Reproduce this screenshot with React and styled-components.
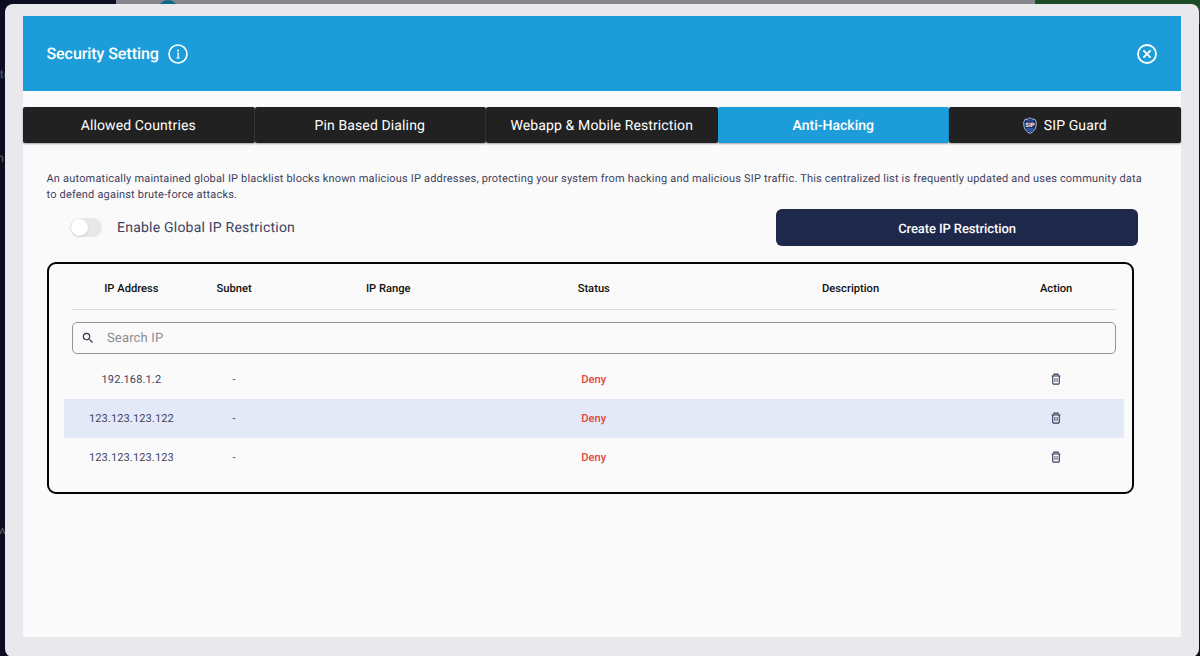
import React from "react";
import styled, { createGlobalStyle } from "styled-components";

const GlobalStyle = createGlobalStyle`
  *, *::before, *::after { box-sizing: border-box; }
  html, body { margin: 0; padding: 0; }
  body {
    overflow: hidden;
    font-family: Roboto, "Liberation Sans", sans-serif;
    color: #3d4260;
    text-rendering: geometricPrecision;
  }
  button, input { font: inherit; color: inherit; text-rendering: inherit; }
`;

const Page = styled.div`
  position: relative;
  width: 1200px;
  height: 656px;
  overflow: hidden;
  background: #0c0d20;
`;

const Backdrop = styled.div`
  display: flex;
  width: 100%;
  height: 100%;
`;

const SideNav = styled.aside`
  width: 116px;
  padding-top: 66px;
  background: #0c0d20;
`;

const NavEnd = styled.div`
  width: ${(p) => p.$width}px;
  height: 16px;
  margin-bottom: ${(p) => p.$gap}px;
  display: flex;
  justify-content: flex-end;
  color: #5d5e6a;
  font-size: 12px;
  line-height: 16px;
`;

const BackPage = styled.div`
  flex: 1;
  padding-left: 42px;
  background: #85868b;
`;

const BackBadge = styled.div`
  width: 20px;
  height: 20px;
  border-radius: 50%;
  background: #0f6888;
`;

const BackBanner = styled.div`
  width: 165px;
  height: 24px;
  background: #1d4c28;
`;

const Modal = styled.section`
  position: absolute;
  top: 4px;
  left: 5px;
  width: 1194px;
  height: 653px;
  padding: 12px 18px 20px;
  border-radius: 8px;
  background: #e8e8ed;
`;

const Panel = styled.div`
  width: 1157.5px;
  height: 621px;
  background: #fafafa;
`;

const Header = styled.header`
  display: flex;
  align-items: center;
  height: 75px;
  padding: 1px 23.5px 0;
  background: #1c9dda;
  color: #fff;
`;

const Title = styled.h1`
  margin: 0 9.5px 0 0;
  font-size: 16px;
  line-height: 20px;
  font-weight: 500;
  letter-spacing: -0.07px;
`;

const IconButton = styled.button`
  display: flex;
  padding: 0;
  border: 0;
  background: none;
  margin-left: ${(p) => (p.$end ? "auto" : "0")};
`;

const Tabs = styled.nav`
  display: grid;
  grid-template-columns: repeat(5, 1fr);
  margin-top: 16px;
  height: 36px;
`;

const Tab = styled.button`
  display: flex;
  align-items: center;
  justify-content: center;
  gap: 7px;
  padding: 1px 0 0;
  border: 0;
  border-right: ${(p) => (p.$divider ? "1px solid #393939" : "0")};
  border-radius: 2px;
  background: ${(p) => (p.$active ? "#1c9dda" : "#212121")};
  box-shadow: 0 1px 2px rgba(0, 0, 0, 0.35);
  color: #fff;
  font-size: 14px;
  letter-spacing: ${(p) => (p.$active ? "0.02px" : "0.12px")};
  font-weight: ${(p) => (p.$active ? 500 : 400)};
`;

const Content = styled.main`
  padding: 28px 36px 0 23.5px;
`;

const Intro = styled.p`
  margin: 0;
  font-size: 11px;
  line-height: 16px;
  letter-spacing: 0.186px;
`;

const Controls = styled.div`
  display: flex;
  align-items: center;
  height: 37px;
  margin-top: 6px;
  padding-left: 23.5px;
`;

const Switch = styled.button`
  display: flex;
  align-items: center;
  width: 32px;
  height: 19px;
  padding: 0 1px;
  border: 0;
  border-radius: 10px;
  background: #e7e7e7;
`;

const Knob = styled.span`
  width: 17px;
  height: 17px;
  border-radius: 50%;
  background: #fff;
  box-shadow: 0 1px 2px rgba(0, 0, 0, 0.12);
`;

const SwitchLabel = styled.span`
  margin-left: 15px;
  font-size: 14px;
  letter-spacing: 0.22px;
`;

const CreateButton = styled.button`
  flex: none;
  width: 362px;
  height: 37px;
  margin-left: auto;
  margin-right: 6.5px;
  padding: 3px 0 0;
  border: 0;
  border-radius: 6px;
  background: #1e284b;
  color: #fff;
  font-size: 13px;
  font-weight: 500;
  letter-spacing: -0.1px;
`;

const TableCard = styled.section`
  width: 1087px;
  height: 232px;
  margin-top: 16px;
  padding: 0 8px 0 15.5px;
  border: 2px solid #050505;
  border-radius: 9px;
`;

const Row = styled.div`
  display: grid;
  grid-template-columns: 1fr 1fr 2fr 2fr 3fr 1fr;
  align-items: center;
  justify-items: center;
  height: 39px;
  padding: 0 16px;
  background: ${(p) => (p.$shaded ? "#e4e9f8" : "transparent")};
  font-size: 11px;
  letter-spacing: 0.14px;
`;

const HeadRow = styled(Row)`
  height: 46px;
  margin: 0 8px;
  padding: 3px 8px 0;
  border-bottom: 1px solid #dcdcdc;
  color: #111;
  font-size: 11.2px;
  font-weight: 500;
  letter-spacing: 0;
`;

const Search = styled.label`
  display: flex;
  align-items: center;
  gap: 12px;
  height: 32px;
  margin: 12px 8px 6px;
  padding: 0 8px;
  border: 1px solid #949494;
  border-radius: 5px;
`;

const SearchInput = styled.input`
  flex: 1;
  padding: 1px 0 0;
  border: 0;
  outline: 0;
  background: none;
  font-size: 13px;
  letter-spacing: 0.15px;
  &::placeholder { color: #8c8c90; opacity: 1; }
`;

const Denied = styled.span`
  color: #e04a40;
  font-size: 11.2px;
  line-height: 13px;
  font-weight: 500;
  letter-spacing: 0;
`;

const DeleteButton = styled(IconButton)`
  padding-bottom: 1px;
`;

const InfoIcon = () => (
  <svg width="20" height="20" viewBox="0 0 20 20" fill="none" stroke="currentColor">
    <circle cx="10" cy="10" r="9" strokeWidth="1.6" />
    <path d="M9.1 9h1.1v5M8.6 13.9h2.900" strokeWidth="1.2" />
    <circle cx="10" cy="6.4" r="1" fill="currentColor" stroke="none" />
  </svg>
);

const CloseIcon = () => (
  <svg width="21" height="20" viewBox="0 0 21 20" fill="none" stroke="currentColor">
    <circle cx="11" cy="10" r="9" strokeWidth="1.8" />
    <path d="M7.400 6.400l7.200 7.200M14.600 6.400l-7.200 7.200" strokeWidth="1.9" />
  </svg>
);

const SearchIcon = () => (
  <svg width="14" height="14" viewBox="0 0 24 24" fill="#30374f">
    <path d="M15.5 14h-.79l-.28-.27A6.47 6.47 0 0 0 16 9.5 6.5 6.5 0 1 0 9.5 16c1.61 0 3.09-.59 4.23-1.57l.27.28v.79l5 4.99L20.49 19zm-6 0C7.01 14 5 11.99 5 9.5S7.01 5 9.5 5 14 7.01 14 9.5 11.99 14 9.5 14" />
  </svg>
);

const TrashIcon = () => (
  <svg width="10" height="12" viewBox="0 0 10 12" fill="none" stroke="#343a59">
    <path d="M.5 3h9M3 2.8V1.1h4v1.7M1.7 3.2v6.9q0 1 1 1h4.6q1 0 1-1V3.2" strokeWidth="1.1" />
    <path d="M3.9 5v4M6.1 5v4" strokeWidth=".9" />
  </svg>
);

const ShieldIcon = () => (
  <svg width="14" height="17" viewBox="0 0 14 17">
    <path d="M7 .7l1.5 1.1 3.7.8 1.1 2.8-.3 4.1c-.6 3.2-2.8 5.5-6 6.9C3.8 15 1.6 12.7 1 9.500L.7 5.400l1.100-2.800 3.700-.8z" fill="#122c67" stroke="#b9d0f1" strokeWidth=".9" />
    <path d="M3.300 3.900h7.500M3.500 11.700h7c-.9 1.300-2.200 2.200-3.500 2.800-1.300-.6-2.600-1.500-3.500-2.800z" fill="#234b94" stroke="#5b82c3" strokeWidth=".6" />
    <text x="7" y="10" textAnchor="middle" fill="#fff" fontFamily="Roboto, sans-serif" fontWeight="700" fontSize="6" letterSpacing="0">SIP</text>
  </svg>
);

const tabs = [
  { label: "Allowed Countries", divider: true },
  { label: "Pin Based Dialing", divider: true },
  { label: "Webapp & Mobile Restriction" },
  { label: "Anti-Hacking", active: true },
  { label: "SIP Guard", icon: <ShieldIcon /> },
];

const columns = ["IP Address", "Subnet", "IP Range", "Status", "Description", "Action"];
const addresses = ["192.168.1.2", "123.123.123.122", "123.123.123.123"];

export default function App() {
  return (
    <Page>
      <GlobalStyle />
      <Backdrop>
        <SideNav>
          <NavEnd $width={10} $gap={68}>te</NavEnd>
          <NavEnd $width={4} $gap={356}>n</NavEnd>
          <NavEnd $width={7} $gap={0}>w</NavEnd>
        </SideNav>
        <BackPage><BackBadge /></BackPage>
        <BackBanner />
      </Backdrop>
      <Modal>
        <Panel>
          <Header>
            <Title>Security Setting</Title>
            <IconButton aria-label="Information"><InfoIcon /></IconButton>
            <IconButton $end aria-label="Close"><CloseIcon /></IconButton>
          </Header>
          <Tabs>
            {tabs.map((t) => (
              <Tab key={t.label} $active={t.active} $divider={t.divider}>
                {t.icon}{t.label}
              </Tab>
            ))}
          </Tabs>
          <Content>
            <Intro>
              An automatically maintained global IP blacklist blocks known malicious IP addresses, protecting your system from hacking and malicious SIP traffic. This centralized list is frequently updated and uses community data to defend against brute-force attacks.
            </Intro>
            <Controls>
              <Switch role="switch" aria-checked="false" aria-label="Enable Global IP Restriction"><Knob /></Switch>
              <SwitchLabel>Enable Global IP Restriction</SwitchLabel>
              <CreateButton>Create IP Restriction</CreateButton>
            </Controls>
            <TableCard>
              <HeadRow>{columns.map((c) => <span key={c}>{c}</span>)}</HeadRow>
              <Search>
                <SearchIcon />
                <SearchInput placeholder="Search IP" />
              </Search>
              {addresses.map((address, i) => (
                <Row key={address} $shaded={i % 2 === 1}>
                  <span>{address}</span>
                  <span>-</span>
                  <span />
                  <Denied>Deny</Denied>
                  <span />
                  <DeleteButton aria-label="Delete"><TrashIcon /></DeleteButton>
                </Row>
              ))}
            </TableCard>
          </Content>
        </Panel>
      </Modal>
    </Page>
  );
}
